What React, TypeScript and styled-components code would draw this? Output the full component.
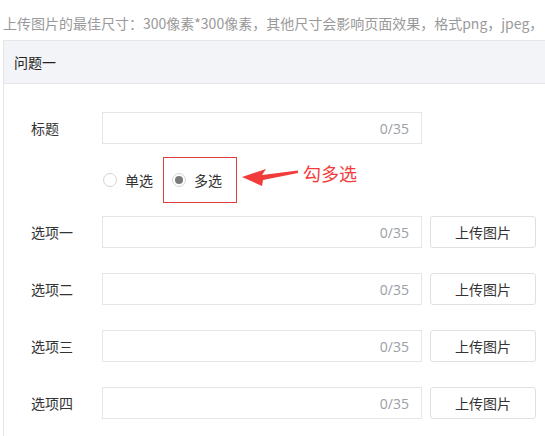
import React from "react";
import styled, { createGlobalStyle } from "styled-components";

const GlobalStyle = createGlobalStyle`
  html, body {
    margin: 0;
    padding: 0;
    background: #ffffff;
    overflow: hidden;
  }
  body {
    font-family: "Microsoft YaHei", "Noto Sans CJK SC", "Noto Sans", sans-serif;
    color: #333333;
  }
`;

const Page = styled.div`
  width: 545px;
  height: 436px;
  overflow: hidden;
`;

const Hint = styled.div`
  box-sizing: border-box;
  height: 40px;
  padding: 16px 0 0 3px;
  font-size: 14px;
  line-height: 14px;
  color: #999999;
  white-space: nowrap;
`;

const Panel = styled.section`
  margin-left: 3px;
  width: 620px;
  border: 1px solid #e6e6e6;
  border-bottom: none;
`;

const PanelHeader = styled.div`
  height: 42px;
  display: flex;
  align-items: center;
  padding-left: 10px;
  background: #f3f4f7;
  border-bottom: 1px solid #e6e6e6;
  font-size: 14px;
  color: #222222;
`;

const PanelBody = styled.div`
  padding: 28px 0 30px 27px;
  display: flex;
  flex-direction: column;
`;

const Row = styled.div<{ $top?: number }>`
  display: flex;
  align-items: center;
  margin-top: ${(p) => p.$top ?? 0}px;
`;

const Label = styled.div`
  width: 71px;
  flex: none;
  font-size: 14px;
  line-height: 20px;
  color: #333333;
`;

const InputBox = styled.div`
  box-sizing: border-box;
  width: 320px;
  height: 32px;
  border: 1px solid #e6e6e6;
  display: flex;
  align-items: center;
  justify-content: flex-end;
  padding-right: 12px;
`;

const Counter = styled.span`
  font-size: 14px;
  color: #9a9ea6;
  font-family: "Open Sans", "Noto Sans", sans-serif;
`;

const UploadButton = styled.button`
  box-sizing: border-box;
  margin-left: 8px;
  width: 106px;
  height: 32px;
  border: 1px solid #e0e0e0;
  border-radius: 3px;
  background: #ffffff;
  font-family: inherit;
  font-size: 14px;
  color: #333333;
  padding: 0;
  cursor: pointer;
`;

const ChoiceRow = styled.div`
  display: flex;
  align-items: center;
  margin: 13px 0 0 71px;
  height: 46px;
`;

const RadioItem = styled.label<{ $boxed?: boolean }>`
  box-sizing: border-box;
  display: flex;
  align-items: center;
  gap: 8px;
  height: 46px;
  font-size: 14px;
  color: #333333;
  padding: ${(p) => (p.$boxed ? "0 14px 0 8px" : "0 0 0 1px")};
  margin-left: ${(p) => (p.$boxed ? "10px" : "0")};
  border: ${(p) => (p.$boxed ? "1px solid #e03c3c" : "none")};
`;

const RadioCircle = styled.span<{ $checked?: boolean }>`
  box-sizing: border-box;
  width: 14px;
  height: 14px;
  border-radius: 50%;
  border: 1px solid #d4d4d4;
  display: flex;
  align-items: center;
  justify-content: center;
  background: #ffffff;
  &::after {
    content: "";
    width: 8px;
    height: 8px;
    border-radius: 50%;
    background: ${(p) => (p.$checked ? "#7a7a7a" : "transparent")};
  }
`;

const Annotation = styled.div`
  align-self: flex-start;
  margin: 5px 0 0 5px;
  display: flex;
  align-items: flex-start;
`;

const ArrowIcon = styled.svg`
  margin-top: 4px;
  flex: none;
`;

const Note = styled.span`
  margin-left: 5px;
  font-size: 18px;
  line-height: 22px;
  color: #f23c3c;
`;

const options = ["选项一", "选项二", "选项三", "选项四"];

export default function App() {
  return (
    <Page>
      <GlobalStyle />
      <Hint>上传图片的最佳尺寸：300像素*300像素，其他尺寸会影响页面效果，格式png，jpeg，</Hint>
      <Panel>
        <PanelHeader>问题一</PanelHeader>
        <PanelBody>
          <Row>
            <Label>标题</Label>
            <InputBox>
              <Counter>0/35</Counter>
            </InputBox>
          </Row>
          <ChoiceRow>
            <RadioItem>
              <RadioCircle />
              单选
            </RadioItem>
            <RadioItem $boxed>
              <RadioCircle $checked />
              多选
            </RadioItem>
            <Annotation>
              <ArrowIcon width="56" height="22" viewBox="0 0 56 22">
                <polygon
                  points="0,11 24,3 20,9 56,4.5 56,7 21,14 20,20"
                  fill="#f23c3c"
                />
              </ArrowIcon>
              <Note>勾多选</Note>
            </Annotation>
          </ChoiceRow>
          {options.map((o, i) => (
            <Row key={o} $top={i === 0 ? 13 : 25}>
              <Label>{o}</Label>
              <InputBox>
                <Counter>0/35</Counter>
              </InputBox>
              <UploadButton>上传图片</UploadButton>
            </Row>
          ))}
        </PanelBody>
      </Panel>
    </Page>
  );
}
